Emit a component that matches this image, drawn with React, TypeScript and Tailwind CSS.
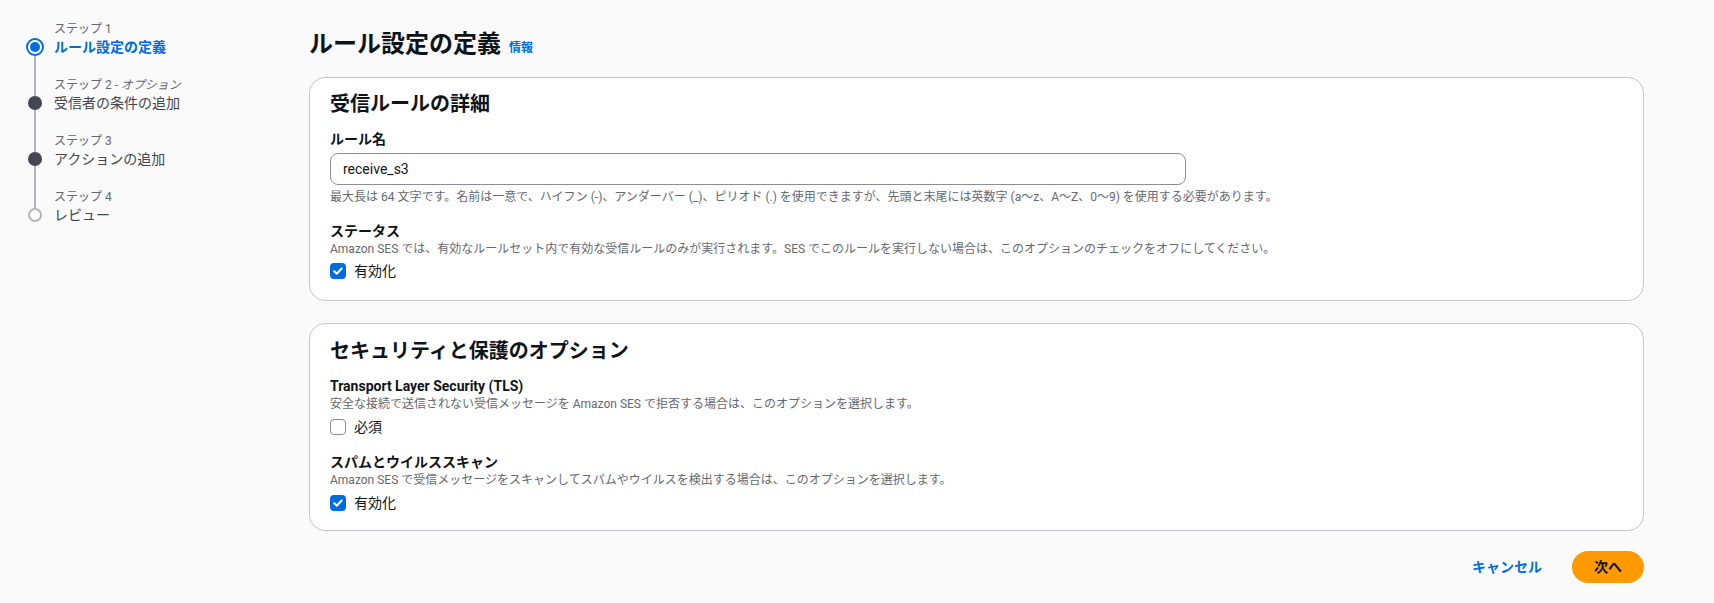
import React from "react";

function Check({ checked }: { checked: boolean }) {
  if (checked) {
    return (
      <span className="flex h-[16px] w-[16px] shrink-0 items-center justify-center rounded-[4px] bg-[#006ce0]">
        <svg width="12" height="12" viewBox="0 0 12 12" fill="none">
          <polyline points="2.2,6.2 4.8,8.8 9.8,3.4" stroke="white" strokeWidth="2" strokeLinecap="round" strokeLinejoin="round" />
        </svg>
      </span>
    );
  }
  return <span className="h-[16px] w-[16px] shrink-0 rounded-[4px] border-[1.5px] border-[#8c8c94] bg-white" />;
}

type Step = { label: string; optional?: boolean; title: string; state: "active" | "done" | "todo" };

const steps: Step[] = [
  { label: "ステップ 1", title: "ルール設定の定義", state: "active" },
  { label: "ステップ 2", optional: true, title: "受信者の条件の追加", state: "done" },
  { label: "ステップ 3", title: "アクションの追加", state: "done" },
  { label: "ステップ 4", title: "レビュー", state: "todo" },
];

function StepDot({ state }: { state: Step["state"] }) {
  if (state === "active") {
    return (
      <span className="flex h-[18px] w-[18px] shrink-0 items-center justify-center rounded-full border-2 border-[#006ce0] bg-white">
        <span className="h-[10px] w-[10px] rounded-full bg-[#006ce0]" />
      </span>
    );
  }
  if (state === "done") {
    return <span className="h-[14px] w-[14px] shrink-0 rounded-full bg-[#424650]" />;
  }
  return <span className="h-[14px] w-[14px] shrink-0 rounded-full border-2 border-[#b4b4bb] bg-white" />;
}

function Sidebar() {
  return (
    <nav className="w-[309px] shrink-0 pl-[25px] pt-[21px]">
      {steps.map((s, i) => {
        const first = i === 0;
        const last = i === steps.length - 1;
        return (
          <div key={i} className="flex">
            <div className="flex w-[20px] flex-col items-center">
              <span className={`h-[16px] w-[2px] ${first ? "" : "bg-[#b4b4bb]"}`} />
              <div className="flex h-[20px] flex-col items-center">
                <span className={`w-[2px] flex-1 ${first ? "" : "bg-[#b4b4bb]"}`} />
                <StepDot state={s.state} />
                <span className={`w-[2px] flex-1 ${last ? "" : "bg-[#b4b4bb]"}`} />
              </div>
              <span className={`h-[20px] w-[2px] ${last ? "" : "bg-[#b4b4bb]"}`} />
            </div>
            <div className="pl-[9px]">
              <div className="h-[16px] text-[12px] leading-[16px] text-[#656871]">
                {s.label}
                {s.optional && <i> - オプション</i>}
              </div>
              <div
                className={`h-[20px] text-[14px] leading-[20px] ${
                  s.state === "active" ? "font-bold text-[#006ce0]" : "text-[#424650]"
                }`}
              >
                {s.title}
              </div>
            </div>
          </div>
        );
      })}
    </nav>
  );
}

function Main() {
  return (
    <main className="flex-1 pr-[70px] pt-[28px]">
      <div className="flex items-baseline gap-[8px]">
        <h1 className="text-[24px] font-bold leading-[32px] text-[#0f141a]">ルール設定の定義</h1>
        <span className="text-[12px] font-bold leading-[16px] text-[#006ce0]">情報</span>
      </div>

      <div className="mt-[17px] flex flex-col gap-[22px]">
        <section className="rounded-[16px] border border-[#c6c6cd] bg-white px-[20px] pb-[19px] pt-[14px]">
          <h2 className="text-[20px] font-bold leading-[24px] text-[#0f141a]">受信ルールの詳細</h2>
          <div className="mt-[13px] text-[14px] font-bold leading-[20px] text-[#0f141a]">ルール名</div>
          <input
            readOnly
            value="receive_s3"
            className="mt-[4px] block h-[32px] w-[856px] rounded-[8px] border border-[#8c8c94] bg-white px-[12px] text-[14px] leading-[20px] text-[#0f141a] outline-none"
          />
          <div className="mt-[4px] text-[12px] leading-[16px] text-[#656871]">
            最大長は 64 文字です。名前は一意で、ハイフン (-)、アンダーバー (_)、ピリオド (.) を使用できますが、先頭と末尾には英数字 (a～z、A～Z、0～9) を使用する必要があります。
          </div>
          <div className="mt-[16px] text-[14px] font-bold leading-[20px] text-[#0f141a]">ステータス</div>
          <div className="text-[12px] leading-[16px] text-[#656871]">
            Amazon SES では、有効なルールセット内で有効な受信ルールのみが実行されます。SES でこのルールを実行しない場合は、このオプションのチェックをオフにしてください。
          </div>
          <label className="mt-[4px] flex h-[20px] items-center gap-[8px]">
            <Check checked />
            <span className="text-[14px] leading-[20px] text-[#0f141a]">有効化</span>
          </label>
        </section>

        <section className="rounded-[16px] border border-[#c6c6cd] bg-white px-[20px] pb-[17px] pt-[15px]">
          <h2 className="text-[20px] font-bold leading-[24px] text-[#0f141a]">セキュリティと保護のオプション</h2>
          <div className="mt-[13px] text-[14px] font-bold leading-[20px] text-[#0f141a]">Transport Layer Security (TLS)</div>
          <div className="text-[12px] leading-[16px] text-[#656871]">
            安全な接続で送信されない受信メッセージを Amazon SES で拒否する場合は、このオプションを選択します。
          </div>
          <label className="mt-[5px] flex h-[20px] items-center gap-[8px]">
            <Check checked={false} />
            <span className="text-[14px] leading-[20px] text-[#0f141a]">必須</span>
          </label>
          <div className="mt-[15px] text-[14px] font-bold leading-[20px] text-[#0f141a]">スパムとウイルススキャン</div>
          <div className="text-[12px] leading-[16px] text-[#656871]">
            Amazon SES で受信メッセージをスキャンしてスパムやウイルスを検出する場合は、このオプションを選択します。
          </div>
          <label className="mt-[5px] flex h-[20px] items-center gap-[8px]">
            <Check checked />
            <span className="text-[14px] leading-[20px] text-[#0f141a]">有効化</span>
          </label>
        </section>
      </div>

      <div className="mt-[20px] flex items-center justify-end gap-[8px]">
        <button className="rounded-full border-2 border-transparent px-[20px] py-[4px] text-[14px] font-bold leading-[20px] text-[#006ce0]">
          キャンセル
        </button>
        <button className="rounded-full border-2 border-[#ff9900] bg-[#ff9900] px-[20px] py-[4px] text-[14px] font-bold leading-[20px] text-[#0f141a]">
          次へ
        </button>
      </div>
    </main>
  );
}

export default function App() {
  return (
    <div className="flex min-h-[603px] w-full bg-[#fafafa] font-['Roboto','Noto_Sans_CJK_JP',sans-serif]">
      <Sidebar />
      <Main />
    </div>
  );
}
